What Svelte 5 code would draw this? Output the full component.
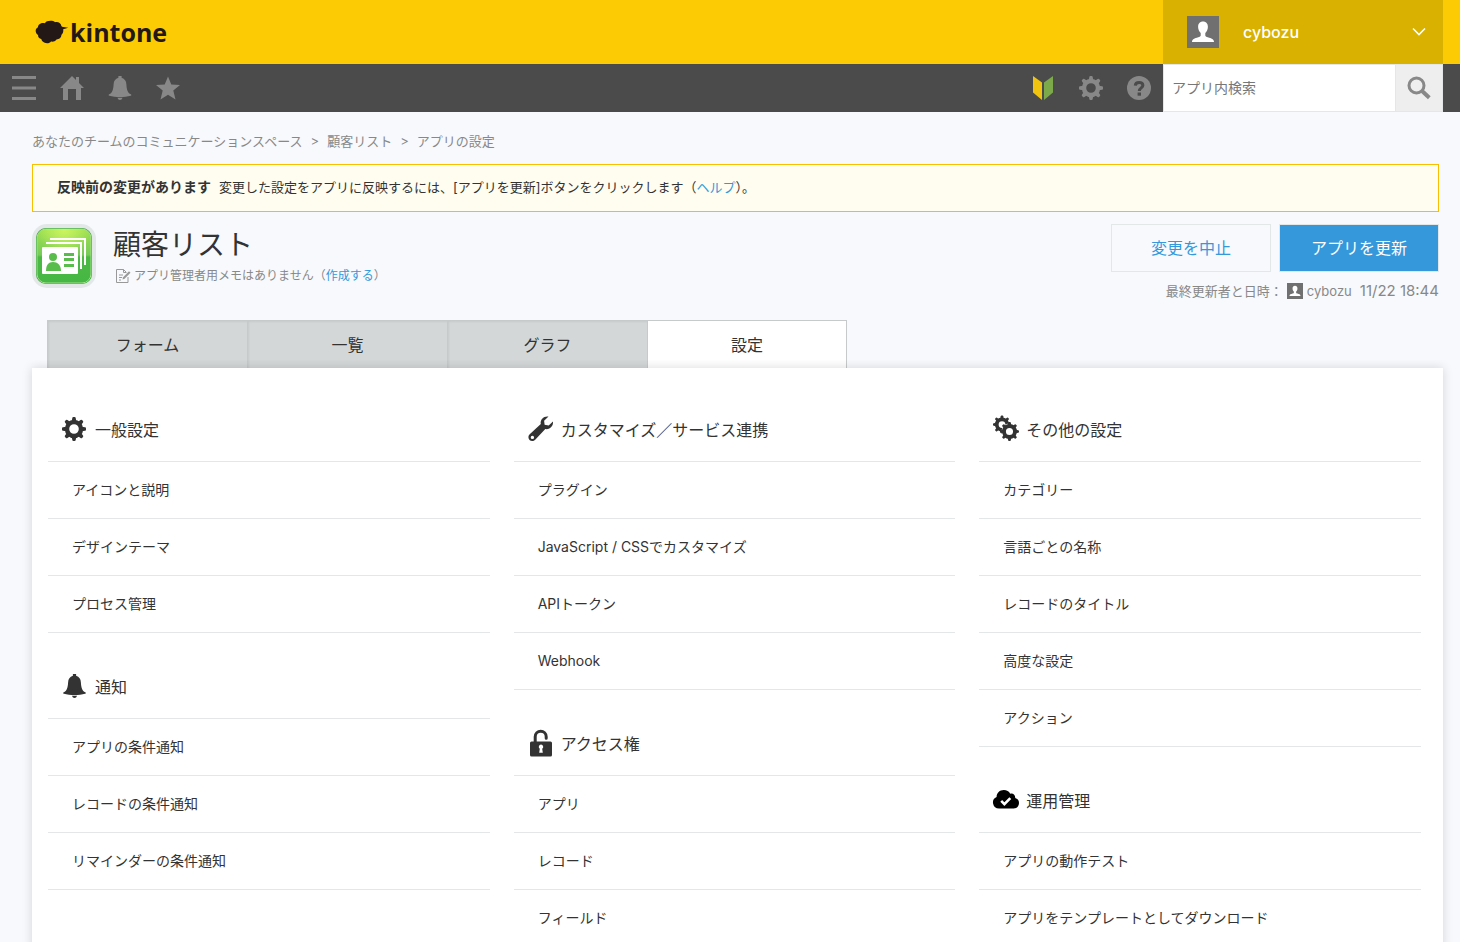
<script>
	let keyword = $state('');
	let activeTab = $state('設定');

	const crumbs = ['あなたのチームのコミュニケーションスペース', '顧客リスト', 'アプリの設定'];
	const tabs = ['フォーム', '一覧', 'グラフ', '設定'];
	const teeth = [0, 45, 90, 135, 180, 225, 270, 315];

	const columns = [
		[
			{ title: '一般設定', icon: 'gear', items: ['アイコンと説明', 'デザインテーマ', 'プロセス管理'] },
			{
				title: '通知',
				icon: 'bell',
				items: ['アプリの条件通知', 'レコードの条件通知', 'リマインダーの条件通知']
			}
		],
		[
			{
				title: 'カスタマイズ／サービス連携',
				icon: 'wrench',
				items: ['プラグイン', 'JavaScript / CSSでカスタマイズ', 'APIトークン', 'Webhook']
			},
			{ title: 'アクセス権', icon: 'lock', items: ['アプリ', 'レコード', 'フィールド'] }
		],
		[
			{
				title: 'その他の設定',
				icon: 'gears',
				items: ['カテゴリー', '言語ごとの名称', 'レコードのタイトル', '高度な設定', 'アクション']
			},
			{
				title: '運用管理',
				icon: 'cloud',
				items: ['アプリの動作テスト', 'アプリをテンプレートとしてダウンロード']
			}
		]
	];
</script>

{#snippet cog(ring = 4.4)}
	<circle cx="12" cy="12" r="7" fill="none" stroke="currentColor" stroke-width={ring} />
	{#each teeth as deg}
		<path
			d="M9.7 4.2 10.3 1Q10.5 0 11.3 0h1.4Q13.5 0 13.7 1l.6 3.2z"
			fill="currentColor"
			transform="rotate({deg} 12 12)"
		/>
	{/each}
{/snippet}

{#snippet bell()}
	<path
		fill="currentColor"
		d="M10.4 0h3.2v1.8c3.2.8 4.6 3.4 4.8 6.6.3 5.3 1.2 8.3 4.4 9.8.9.5.7 1.3-.2 1.6-6 1.6-15.2 1.6-21.2 0-.9-.3-1.1-1.1-.2-1.6C4.4 16.7 5.3 13.7 5.6 8.4 5.8 5.2 7.2 2.6 10.4 1.8zM9.4 21.7q2.6.3 5.2 0-.8 2.3-2.6 2.3t-2.6-2.3z"
	/>
{/snippet}

{#snippet person()}
	<rect width="32" height="32" fill="#707070" />
	<path
		fill="#fff"
		d="M16 5.5c3 0 4.9 2.1 4.9 5.3 0 2.500-1 5-2.6 6.3v2.3c0 .9 1 1.3 2.5 1.8 3.6 1.1 6.2 1.9 6.200 4.800H5c0-2.900 2.600-3.700 6.200-4.800 1.500-.5 2.500-.9 2.500-1.800v-2.300c-1.600-1.300-2.600-3.800-2.600-6.300 0-3.200 1.900-5.300 4.900-5.300z"
	/>
{/snippet}

{#snippet sectionIcon(name)}
	<svg class="section-icon" viewBox="0 0 26 26" aria-hidden="true">
		{#if name === 'gear'}
			<g transform="translate(1 1)">{@render cog()}</g>
		{:else if name === 'bell'}
			<g transform="translate(1.5 1)">{@render bell()}</g>
		{:else if name === 'wrench'}
			<path
				transform="translate(1 0)"
				fill="currentColor"
				fill-rule="evenodd"
				d="M20.5.6c-4.5-.8-8.6 2.9-7.7 7.5L1.7 18.3c-1.7 1.6-1.7 4.1-.2 5.7 1.6 1.5 4.2 1.4 5.7-.3L17.3 13c4.5.9 8.2-2.9 7.7-7.4L20.7 9.6 16.6 8.7 16.1 4.8zM4.4 19.7a1.7 1.7 0 1 1 0 3.4 1.7 1.7 0 0 1 0-3.4z"
			/>
		{:else if name === 'lock'}
			<path
				d="M8.2 13V6.8a5.5 5.5 0 0 1 11 0v1.5"
				fill="none"
				stroke="currentColor"
				stroke-width="3"
				stroke-linecap="round"
			/>
			<rect x="3" y="11.5" width="22" height="15" rx="1.5" fill="currentColor" />
			<path fill="#fff" d="M14 14.5a2.3 2.3 0 0 1 1.2 4.2l.6 4.1h-3.6l.6-4.1A2.3 2.3 0 0 1 14 14.5z" />
		{:else if name === 'gears'}
			<g transform="translate(1 -.5) scale(.75)">{@render cog(5)}</g>
			<circle cx="17.4" cy="15.5" r="8" fill="#fff" />
			<g transform="translate(8 6) scale(.79)">{@render cog(5)}</g>
		{:else}
			<path
				transform="translate(1 -1)"
				fill="#000"
				d="M6 22.5a6 6 0 0 1-2.4-11.5C3.6 6.8 6.8 4 10.8 4c2.9 0 5.2 1.3 6.4 3.7 3-.8 5.3 1.3 5 4.4 2.3.6 3.8 2.4 3.8 4.9 0 3.1-2.3 5.5-5.4 5.5z"
			/>
			<path d="m9.200 13.900 3.200 3.200 5.900-6" fill="none" stroke="#fff" stroke-width="2.6" />
		{/if}
	</svg>
{/snippet}

<div class="page">
	<header>
		<a href="#top" class="logo">
			<svg viewBox="0 0 34 24" width="34" height="24" aria-hidden="true">
				<path
					fill="#231815"
					d="M10 3.2C11 .4 18 .1 20 2.2c2.4-1 5.9.5 6.4 3.7l.6.9 6.2.9-5 1.6c.4 2.6-.5 4.5-1.7 5.4-.2 2.9-2.2 4.6-5 4.8-1.3 1.9-3.6 2.4-5.5 2-1.2 2-4.7 2.3-6.8 1-1.7-.9-2.7-2.2-2.9-3.6-2.2-.4-3.4-1.8-3.2-3.8C.1 13.4-.3 8.6 3 7.2 2.9 4 6.6 2.2 10 3.2z"
				/>
			</svg>
			<span>kintone</span>
		</a>
		<button class="user">
			<svg viewBox="0 0 32 32" width="32" height="32" aria-hidden="true">{@render person()}</svg>
			<span>cybozu</span>
			<svg class="chevron" viewBox="0 0 14 10" width="14" height="10" aria-hidden="true">
				<path d="m1 1.5 6 6 6-6" fill="none" stroke="#fff" stroke-width="1.6" />
			</svg>
		</button>
	</header>

	<nav aria-label="メイン">
		<button class="tool" aria-label="メニュー">
			<svg viewBox="0 0 24 24"><path fill="currentColor" d="M0 0h24v3H0zM0 10.5h24v3H0zM0 21h24v3H0z" /></svg>
		</button>
		<a class="tool" href="#home" aria-label="ホーム">
			<svg viewBox="0 0 24 24">
				<path fill="currentColor" d="M12 0l4 4V1h3v6l5 5h-3v12h-5V13H8v11H3V12H0z" />
			</svg>
		</a>
		<button class="tool" aria-label="通知">
			<svg viewBox="0 0 24 24">{@render bell()}</svg>
		</button>
		<button class="tool" aria-label="お気に入り">
			<svg viewBox="0 0 24 24">
				<path fill="currentColor" d="m12 .5 3.3 8 8.7.5-6.7 5.6 2.2 8.9-7.5-4.8-7.5 4.8 2.2-8.9L0 9l8.7-.5z" />
			</svg>
		</button>
		<button class="tool guide" aria-label="ガイド">
			<svg viewBox="0 0 24 24">
				<path fill="#f1c40f" d="M2 0l9 6.5V24L2 16.500z" />
				<path fill="#7caa4b" d="M22 0l-9 6.5V24l9-7.500z" />
			</svg>
		</button>
		<button class="tool" aria-label="設定">
			<svg viewBox="0 0 24 24">{@render cog()}</svg>
		</button>
		<button class="tool" aria-label="ヘルプ">
			<svg viewBox="0 0 24 24">
				<circle cx="12" cy="12" r="12" fill="currentColor" />
				<path d="M8.3 9.600q.2-3 3.800-3t3.800 2.700c0 2.600-3.600 2.500-3.600 5.600" fill="none" stroke="#4b4b4b" stroke-width="3" />
				<path fill="#4b4b4b" d="M10.6 16.500h3.400v3.200h-3.400z" />
			</svg>
		</button>
		<form class="search" onsubmit={(e) => e.preventDefault()}>
			<input type="text" placeholder="アプリ内検索" aria-label="アプリ内検索" bind:value={keyword} />
			<button aria-label="検索">
				<svg viewBox="0 0 24 24" width="24" height="24">
					<circle cx="9.5" cy="9.5" r="7.5" fill="none" stroke="#888" stroke-width="3" />
					<path d="m14.8 14.8 7.5 7" stroke="#888" stroke-width="4" />
				</svg>
			</button>
		</form>
	</nav>

	<main>
		<ol class="crumbs">
			{#each crumbs as crumb}
				<li><a href="#crumb">{crumb}</a></li>
			{/each}
		</ol>

		<div class="notice">
			<strong>反映前の変更があります</strong>
			<span>変更した設定をアプリに反映するには、[アプリを更新]ボタンをクリックします（<a href="#help">ヘルプ</a>）。</span>
		</div>

		<section class="app">
			<svg class="app-icon" viewBox="0 0 64 64" aria-hidden="true">
				<defs>
					<linearGradient id="green" x1="0" y1="0" x2="0" y2="1">
						<stop offset="0" stop-color="#9fe04f" />
						<stop offset=".48" stop-color="#76cb58" />
						<stop offset=".52" stop-color="#4cb944" />
						<stop offset="1" stop-color="#46b744" />
					</linearGradient>
					<radialGradient id="shine" cx=".5" cy="0" r=".5">
						<stop offset="0" stop-color="#cdf560" />
						<stop offset="1" stop-color="#cdf560" stop-opacity="0" />
					</radialGradient>
				</defs>
				<rect width="64" height="64" rx="15" fill="#e3e7e8" />
				<rect x="4" y="4" width="56" height="56" rx="10" fill="#2f9e36" />
				<rect x="5" y="5" width="54" height="54" rx="9" fill="url(#green)" stroke="#a3e28a" />
				<rect x="5" y="5" width="54" height="54" rx="9" fill="url(#shine)" />
				<path d="M18 15h35v26M14 19h35v26" fill="none" stroke="#fff" stroke-width="2" />
				<rect x="10" y="23" width="36" height="27" rx="1" fill="#fff" />
				<g fill="#59bd4c">
					<circle cx="21" cy="33" r="4" />
					<path d="M14 47c0-6 2.5-9 7-9s8 3 8 9z" />
					<path d="M32 29h10v3H32zM32 34h10v3H32zM32 40h10v3H32z" />
				</g>
			</svg>
			<div class="app-name">
				<h1>顧客リスト</h1>
				<p>
					<svg viewBox="0 0 16 16" width="16" height="16" aria-hidden="true">
						<path d="M13 9v5.5H1.5v-13h7l3 3M8.500 1.500v3h2.500M4 7h4M4 9.500h3M4 12h2" fill="none" stroke="#999" />
						<path d="m7.5 11.5.6-2.3 5.9-5.9 1.5 1.5-5.9 5.9z" fill="#999" />
					</svg>
					<span>アプリ管理者用メモはありません（<a href="#memo">作成する</a>）</span>
				</p>
			</div>
			<div class="app-actions">
				<div class="buttons">
					<button>変更を中止</button>
					<button class="primary">アプリを更新</button>
				</div>
				<p>
					<span>最終更新者と日時：</span>
					<svg viewBox="0 0 32 32" width="16" height="16" aria-hidden="true">{@render person()}</svg>
					<span>cybozu</span>
					<time>11/22 18:44</time>
				</p>
			</div>
		</section>

		<div class="tabs" role="tablist">
			{#each tabs as tab}
				<button
					role="tab"
					aria-selected={tab === activeTab}
					class:active={tab === activeTab}
					onclick={() => (activeTab = tab)}>{tab}</button
				>
			{/each}
		</div>

		<div class="panel">
			{#each columns as groups}
				<div class="column">
					{#each groups as group}
						<section>
							<h2>{@render sectionIcon(group.icon)}{group.title}</h2>
							<ul>
								{#each group.items as item}
									<li><a href="#setting">{item}</a></li>
								{/each}
							</ul>
						</section>
					{/each}
				</div>
			{/each}
		</div>
	</main>
</div>

<style>
	:global(body) {
		color: #333;
		font-family: Inter, 'Noto Sans CJK JP', sans-serif;
		font-size: 14px;
	}
	.page {
		height: 100vh;
		overflow: hidden;
		background: #f7f9fc;
	}
	svg {
		display: block;
		flex: none;
	}
	a {
		color: inherit;
		text-decoration: none;
	}
	button,
	input {
		font: inherit;
		color: inherit;
		border: 0;
		padding: 0;
		margin: 0;
		box-sizing: border-box;
	}
	button {
		background: none;
		cursor: pointer;
	}
	h1,
	h2,
	p,
	ul,
	ol {
		margin: 0;
		padding: 0;
		font-weight: normal;
		list-style: none;
	}

	header {
		display: flex;
		justify-content: space-between;
		height: 64px;
		padding-right: 17px;
		background: #fdcb03;
	}
	.logo {
		display: flex;
		align-items: center;
		gap: 1px;
		padding-left: 35px;
		color: #231815;
		font: bold 25px 'Open Sans', sans-serif;
	}
	.user {
		display: flex;
		align-items: center;
		gap: 24px;
		width: 280px;
		padding: 0 17px 0 24px;
		background: #d9b100;
		color: #fff;
		font-size: 16px;
		font-weight: 500;
	}
	.chevron {
		margin-left: auto;
	}

	nav {
		display: flex;
		height: 48px;
		padding-right: 17px;
		background: #4b4b4b;
		color: #888;
	}
	.tool {
		display: grid;
		place-items: center;
		width: 48px;
		height: 48px;
	}
	.tool svg {
		width: 24px;
		height: 24px;
	}
	.guide {
		margin-left: auto;
	}
	.search {
		display: flex;
		width: 280px;
	}
	.search input {
		flex: 1;
		min-width: 0;
		padding: 0 8px 2px;
		border: 1px solid #e3e7e8;
		background: #fff;
		color: #333;
	}
	.search input::placeholder {
		color: #777;
		opacity: 1;
	}
	.search button {
		display: grid;
		place-items: center;
		width: 47px;
		border: 1px solid #e3e7e8;
		border-left: 0;
		background: #eee;
	}

	main {
		padding: 0 17px 0 32px;
	}
	.crumbs {
		display: flex;
		align-items: center;
		height: 48px;
		padding: 4px 0 0;
		color: #888;
		font-size: 13px;
	}
	.crumbs li + li::before {
		content: '>';
		margin: 0 8px;
	}
	.notice {
		display: flex;
		align-items: center;
		gap: 8px;
		height: 42px;
		margin-right: 4px;
		padding: 0 24px 4px;
		border: 1px solid #fabe00;
		background: #fffdf0;
		font-size: 13px;
	}
	.notice strong {
		font-size: 14px;
	}
	.notice a,
	.app-name a {
		color: #3498db;
	}

	.app {
		display: flex;
		height: 96px;
		margin: 12px 4px 0 0;
	}
	.app-icon {
		width: 64px;
		height: 64px;
	}
	.app-name {
		margin-left: 17px;
	}
	h1 {
		font-size: 28px;
		line-height: 42px;
	}
	.app-name p {
		display: flex;
		align-items: center;
		gap: 3px;
		padding-left: 2px;
		color: #888;
		font-size: 12px;
		line-height: 20px;
	}
	.app-actions {
		margin-left: auto;
	}
	.buttons {
		display: flex;
		justify-content: flex-end;
		gap: 8px;
	}
	.buttons button {
		width: 160px;
		height: 48px;
		padding-bottom: 2px;
		border: 1px solid #e3e7e8;
		color: #3498db;
		font-size: 16px;
	}
	.buttons .primary {
		background: #3498db;
		color: #fff;
	}
	.app-actions p {
		display: flex;
		align-items: center;
		justify-content: flex-end;
		gap: 4px;
		color: #888;
		font-size: 13px;
		line-height: 38px;
	}
	time {
		margin-left: 4px;
		font-size: 15px;
	}

	.tabs {
		display: flex;
		padding-left: 15px;
	}
	.tabs button {
		width: 200px;
		height: 48px;
		padding-bottom: 2px;
		border: solid #c6caca;
		border-width: 1px 0 0 1px;
		background: #d4d7d7;
		box-shadow: inset 1px 1px 2px #c6caca;
		font-size: 16px;
	}
	.tabs .active {
		border-right-width: 1px;
		background: #fff;
		box-shadow: none;
	}
	.panel {
		display: grid;
		grid-template-columns: repeat(3, minmax(0, 1fr));
		gap: 24px;
		padding: 29px 22px 29px 16px;
		background: #fff;
		box-shadow: 0 0 10px rgba(0, 0, 0, 0.15);
		clip-path: inset(-8px -17px 0 -32px);
	}
	section + section {
		margin-top: 21px;
	}
	h2 {
		display: flex;
		align-items: center;
		gap: 8px;
		height: 64px;
		padding-left: 13px;
		border-bottom: 1px solid #e3e7e8;
		font-size: 16px;
	}
	.section-icon {
		width: 26px;
		height: 26px;
		overflow: visible;
	}
	.column li {
		border-bottom: 1px solid #e3e7e8;
	}
	.column li a {
		display: block;
		padding: 0 24px;
		line-height: 56px;
	}
</style>
